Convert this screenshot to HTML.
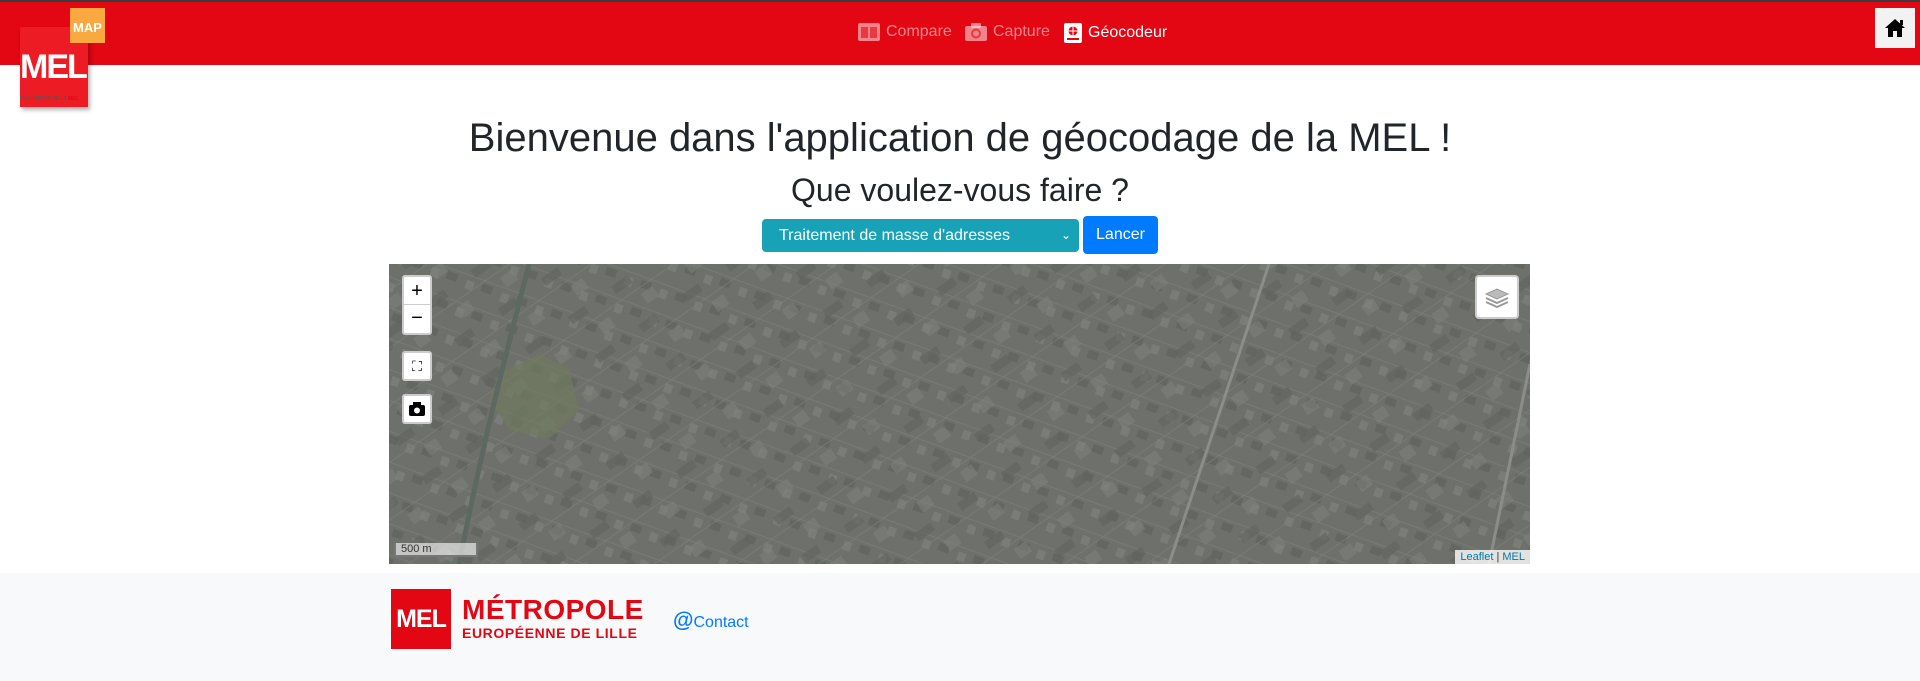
<!DOCTYPE html>
<html><head><meta charset="utf-8"><style>
*{box-sizing:border-box;margin:0;padding:0}
body{width:1920px;height:681px;overflow:hidden;background:#fff;font-family:"Liberation Sans",Arial,sans-serif;position:relative}
.nav{position:absolute;left:0;top:0;width:1920px;height:65px;background:#e30613;border-top:2px solid #3c3c3c}
.ni{position:absolute;top:21px;font-size:16px;color:rgba(255,255,255,.5);display:flex;align-items:center;gap:6px}
.ni svg{display:block}
.home{position:absolute;left:1875px;top:6px;width:40px;height:40px;background:#f2f2f2;display:flex;align-items:center;justify-content:center}
h1{position:absolute;left:0;width:1920px;top:114px;text-align:center;font-size:40px;font-weight:400;color:#212529;line-height:48px}
h2{position:absolute;left:0;width:1920px;top:170px;text-align:center;font-size:32px;font-weight:400;color:#212529;line-height:40px}
.sel{position:absolute;left:762px;top:219px;width:317px;height:33px;background:#17a2b8;border-radius:4px;color:#fff;font-size:16px;line-height:33px;padding-left:17px}
.btn{position:absolute;left:1083px;top:216px;width:75px;height:38px;background:#007bff;border-radius:4px;color:#fff;font-size:16px;line-height:38px;text-align:center}
.map{position:absolute;left:389px;top:264px;width:1141px;height:300px;overflow:hidden;background:#6d706a}
.ctl{position:absolute;left:13px;width:30px;background:#fff;border-radius:3px;display:flex;align-items:center;justify-content:center;font-size:20px;color:#000}
.foot{position:absolute;left:0;top:573px;width:1920px;height:108px;background:#f8f9fa}
</style></head><body>
<div class="nav">
 <div style="position:absolute;left:20px;top:6px;width:85px;height:100px">
  <div style="position:absolute;left:0;top:19px;width:68px;height:80px;background:#ed1c24;box-shadow:2px 3px 4px rgba(0,0,0,.3)"></div>
  <div style="position:absolute;left:50px;top:0;width:35px;height:35px;background:#f9a93f;color:#fff;font-weight:700;font-size:13px;text-align:center;line-height:40px">MAP</div>
  <div style="position:absolute;left:0;top:40px;color:#fff;font-weight:900;font-size:34px;letter-spacing:-2px">MEL</div>
  <div style="position:absolute;left:0;top:88px;font-size:5px;color:#555;white-space:nowrap">LES CARTES DE LA <b style="color:#e30613">MEL</b></div>
 </div>
 <div class="ni" style="left:858px"><svg width="22" height="18"><rect x="0" y="0" width="22" height="18" rx="2" fill="rgba(255,255,255,.5)"/><rect x="3" y="4" width="7" height="11" fill="#e30613" opacity=".6"/><rect x="12" y="4" width="7" height="11" fill="#e30613" opacity=".6"/></svg>Compare</div>
 <div class="ni" style="left:965px"><svg width="22" height="18"><rect x="0" y="3" width="22" height="15" rx="2" fill="rgba(255,255,255,.5)"/><rect x="6" y="0" width="10" height="5" rx="1" fill="rgba(255,255,255,.5)"/><circle cx="11" cy="10.5" r="4" fill="none" stroke="#e30613" stroke-width="2" opacity=".6"/></svg>Capture</div>
 <div class="ni" style="left:1064px;color:#fff"><svg width="18" height="20"><rect x="0" y="0" width="18" height="20" rx="2" fill="#fff"/><circle cx="9" cy="8" r="4.5" fill="#e30613"/><path d="M4.5 8h9M9 3.5v9" stroke="#fff" stroke-width="1"/><rect x="3" y="15" width="12" height="2" fill="#e30613"/></svg>Géocodeur</div>
 <div class="home"><svg width="22" height="20" viewBox="0 0 22 20"><path d="M11 1L1 10h3v9h5v-6h4v6h5v-9h3z" fill="#000"/><rect x="16" y="2" width="3" height="5" fill="#000"/></svg></div>
</div>
<h1>Bienvenue dans l'application de géocodage de la MEL !</h1>
<h2>Que voulez-vous faire ?</h2>
<div class="sel">Traitement de masse d'adresses<span style="position:absolute;right:8px;top:0;font-size:12px">&#8964;</span></div>
<div class="btn">Lancer</div>
<div class="map">
 <svg width="1141" height="300" style="position:absolute;left:0;top:0">
  <defs>
   <pattern id="p" width="37" height="29" patternUnits="userSpaceOnUse" patternTransform="rotate(20)"><rect width="37" height="29" fill="#6e716b"/><rect x="2" y="3" width="15" height="6" fill="#77797400"/><rect x="21" y="15" width="11" height="8" fill="#646761"/><rect x="5" y="17" width="8" height="9" fill="#7a7c77"/><path d="M0 12h37" stroke="#787a75" stroke-width="1"/></pattern>
   <pattern id="q" width="53" height="47" patternUnits="userSpaceOnUse" patternTransform="rotate(-35)"><rect width="53" height="47" fill="none"/><rect x="10" y="5" width="20" height="9" fill="#5f625d" opacity=".6"/><rect x="30" y="28" width="14" height="12" fill="#80827d" opacity=".5"/><path d="M0 22h53" stroke="#7f807b" stroke-width="1" opacity=".6"/></pattern>
  </defs>
  <rect width="1141" height="300" fill="url(#p)"/>
  <rect width="1141" height="300" fill="url(#q)"/>
  <path d="M110 110 l40 -20 l30 15 l10 40 l-30 30 l-40 -10 l-20 -30z" fill="#6f7a60" opacity=".7"/>
  <path d="M140 0 C120 80 100 150 70 300" stroke="#5e6862" stroke-width="5" fill="none"/>
  <path d="M780 300 L880 0" stroke="#8c8d89" stroke-width="3"/>
  <path d="M1100 300 L1141 100" stroke="#8c8d89" stroke-width="3"/>
 </svg>
 <div class="ctl" style="top:11px;height:60px;flex-direction:column;border:2px solid rgba(0,0,0,.2)"><div style="height:28px;line-height:28px;border-bottom:1px solid #ccc;width:100%;text-align:center">+</div><div style="height:28px;line-height:26px">−</div></div>
 <div class="ctl" style="top:87px;height:30px;font-size:14px;border:2px solid rgba(0,0,0,.2)">⛶</div>
 <div class="ctl" style="top:130px;height:30px;border:2px solid rgba(0,0,0,.2)"><svg width="16" height="14"><rect x="0" y="3" width="16" height="11" rx="2"/><rect x="4" y="0" width="8" height="4"/><circle cx="8" cy="8.5" r="3" fill="#fff"/></svg></div>
 <div style="position:absolute;right:11px;top:11px;width:44px;height:44px;background:#fff;border-radius:4px;border:2px solid rgba(0,0,0,.2);display:flex;align-items:center;justify-content:center"><svg width="26" height="26"><path d="M13 15L2 10L13 5L24 10Z" fill="#bbb" stroke="#999"/><path d="M2 14l11 5 11-5" fill="none" stroke="#999" stroke-width="2"/><path d="M2 18l11 5 11-5" fill="none" stroke="#999" stroke-width="2"/></svg></div>
 <div style="position:absolute;left:5px;bottom:7px;width:84px;height:14px;border:2px solid #777;border-top:none;background:rgba(255,255,255,.6);font-size:11px;color:#333;padding-left:5px;line-height:12px">500 m</div>
 <div style="position:absolute;right:0;bottom:0;background:rgba(255,255,255,.8);font-size:11px;color:#0078a8;padding:1px 5px">Leaflet <span style="color:#333">|</span> MEL</div>
</div>
<div class="foot">
 <div style="position:absolute;left:391px;top:16px;width:60px;height:60px;background:#e30613;color:#fff;font-weight:900;font-size:25px;line-height:60px;text-align:center;letter-spacing:-1px">MEL</div>
 <div style="position:absolute;left:462px;top:23px;color:#e30613;font-weight:700;font-size:28px;line-height:28px;letter-spacing:.5px">MÉTROPOLE</div>
 <div style="position:absolute;left:462px;top:52px;color:#e30613;font-weight:700;font-size:14px;letter-spacing:.6px">EUROPÉENNE DE LILLE</div>
 <div style="position:absolute;left:673px;top:36px;color:#007bff;font-size:16px"><b style="font-size:21px">@</b>Contact</div>
</div>
</body></html>
